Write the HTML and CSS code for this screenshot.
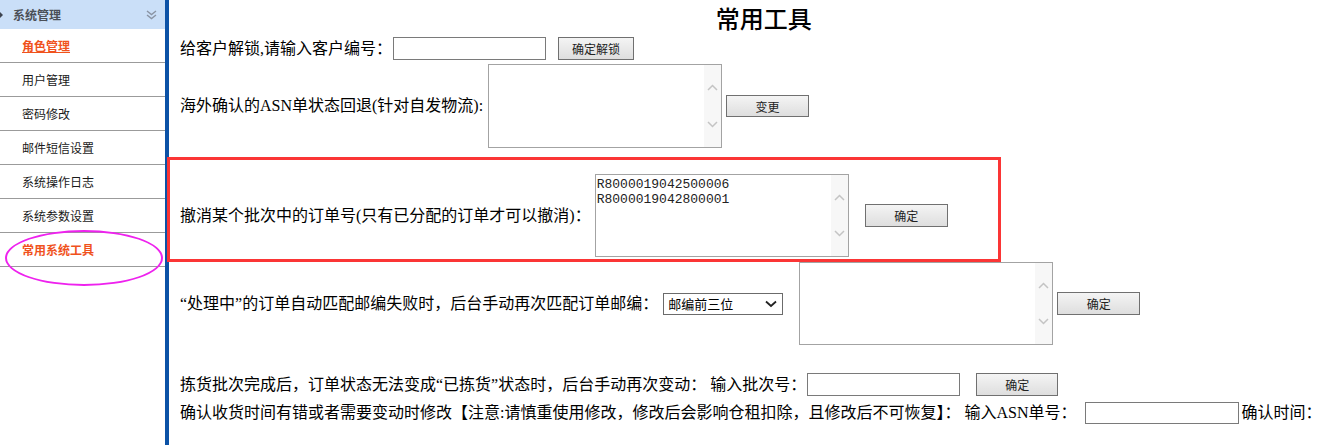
FILE: index.html
```html
<!DOCTYPE html>
<html lang="zh-CN">
<head>
    <meta charset="UTF-8">
    <title>常用工具</title>
    <link rel="stylesheet" href="styles.css">
</head>
<body>
    <div class="page">
        <div class="side">
            <div class="side-head">
                <span class="arrow"></span>
                <span class="head-text">系统管理</span>
                <svg class="fold" width="11" height="10" viewBox="0 0 11 10">
                    <path d="M1 1 L5.5 4.5 L10 1 M1 5 L5.5 8.5 L10 5" fill="none" stroke="#8a94a4" stroke-width="1.4"/>
                </svg>
            </div>
            <ul class="menu">
                <li><a href="#" class="link-on">角色管理</a></li>
                <li><a href="#">用户管理</a></li>
                <li><a href="#">密码修改</a></li>
                <li><a href="#">邮件短信设置</a></li>
                <li><a href="#">系统操作日志</a></li>
                <li><a href="#">系统参数设置</a></li>
                <li><a href="#" class="current">常用系统工具</a></li>
            </ul>
            <div class="ring"></div>
        </div>

        <div class="main">
            <h1>常用工具</h1>

            <div class="row r1">
                <span class="label">给客户解锁,请输入客户编号：</span>
                <input type="text" class="txt txt1">
                <button type="button" class="btn btn1">确定解锁</button>
            </div>

            <div class="row r2">
                <span class="label">海外确认的ASN单状态回退(针对自发物流):</span>
                <div class="area area2">
                    <textarea></textarea>
                    <div class="scroll">
                        <svg width="11" height="7" viewBox="0 0 11 7"><path d="M1 6 L5.5 1.5 L10 6" fill="none" stroke="#c4c4c4" stroke-width="1.5"/></svg>
                        <svg width="11" height="7" viewBox="0 0 11 7"><path d="M1 1 L5.5 5.5 L10 1" fill="none" stroke="#c4c4c4" stroke-width="1.5"/></svg>
                    </div>
                </div>
                <button type="button" class="btn btn2">变更</button>
            </div>

            <div class="row r3">
                <span class="label">撤消某个批次中的订单号(只有已分配的订单才可以撤消)：</span>
                <div class="area area3">
                    <textarea>R8000019042500006
R8000019042800001</textarea>
                    <div class="scroll">
                        <svg width="11" height="7" viewBox="0 0 11 7"><path d="M1 6 L5.5 1.5 L10 6" fill="none" stroke="#c4c4c4" stroke-width="1.5"/></svg>
                        <svg width="11" height="7" viewBox="0 0 11 7"><path d="M1 1 L5.5 5.5 L10 1" fill="none" stroke="#c4c4c4" stroke-width="1.5"/></svg>
                    </div>
                </div>
                <button type="button" class="btn btn3">确定</button>
            </div>

            <div class="row r4">
                <span class="label">“处理中”的订单自动匹配邮编失败时，后台手动再次匹配订单邮编：</span>
                <div class="select">
                    <span>邮编前三位</span>
                    <svg width="12" height="8" viewBox="0 0 12 8"><path d="M1 1.5 L6 6 L11 1.5" fill="none" stroke="#222" stroke-width="1.8"/></svg>
                </div>
                <div class="area area4">
                    <textarea></textarea>
                    <div class="scroll">
                        <svg width="11" height="7" viewBox="0 0 11 7"><path d="M1 6 L5.5 1.5 L10 6" fill="none" stroke="#c4c4c4" stroke-width="1.5"/></svg>
                        <svg width="11" height="7" viewBox="0 0 11 7"><path d="M1 1 L5.5 5.5 L10 1" fill="none" stroke="#c4c4c4" stroke-width="1.5"/></svg>
                    </div>
                </div>
                <button type="button" class="btn btn4">确定</button>
            </div>

            <div class="row r5">
                <span class="label">拣货批次完成后，订单状态无法变成“已拣货”状态时，后台手动再次变动： 输入批次号：</span>
                <input type="text" class="txt txt5">
                <button type="button" class="btn btn5">确定</button>
            </div>

            <div class="row r6">
                <span class="label">确认收货时间有错或者需要变动时修改【注意:请慎重使用修改，修改后会影响仓租扣除，且修改后不可恢复】： 输入ASN单号：</span>
                <input type="text" class="txt txt6">
                <span class="label tail">确认时间：</span>
            </div>

            <div class="mark"></div>
        </div>
    </div>
</body>
</html>
```

FILE: styles.css
```css
body {
    margin: 0;
    background-color: #fff;
    font-family: "Liberation Serif", "Noto Sans CJK SC", serif;
    color: #000;
    overflow: hidden;
}
.page {
    display: flex;
    height: 445px;
}

/* left menu */
.side {
    position: relative;
    width: 165px;
    flex: none;
    border-right: 4px solid #0c52a6;
    font-family: "Noto Sans CJK SC", sans-serif;
    font-size: 12px;
}
.side-head {
    height: 29px;
    background-color: #cadff8;
    display: flex;
    align-items: center;
    color: #4a4f57;
    font-weight: bold;
}
.arrow {
    width: 0;
    height: 0;
    border-top: 4px solid transparent;
    border-bottom: 4px solid transparent;
    border-left: 4px solid #3d4450;
    margin-left: -1px;
}
.head-text {
    margin-left: 10px;
}
.fold {
    margin-left: auto;
    margin-right: 8px;
}
.menu {
    list-style: none;
    margin: 0;
    padding: 0;
}
.menu li {
    height: 33px;
    border-bottom: 1px solid #9b9b9b;
    display: flex;
    align-items: center;
    padding-left: 22px;
}
.menu a {
    color: #1a1a1a;
    text-decoration: none;
}
.menu a.link-on {
    color: #f0521c;
    text-decoration: underline;
    font-weight: bold;
}
.menu a.current {
    color: #f0521c;
    font-weight: bold;
}
.ring {
    position: absolute;
    left: 5px;
    top: 230px;
    width: 158px;
    height: 56px;
    box-sizing: border-box;
    border: 2px solid #ee22ee;
    border-radius: 50%;
}

/* tools */
.main {
    position: relative;
    flex: 1;
    padding-left: 11px;
    white-space: nowrap;
}
h1 {
    margin: 0;
    height: 37px;
    line-height: 36px;
    font-size: 24px;
    font-weight: 500;
    text-align: center;
    padding-left: 26px;
    font-family: "Noto Sans CJK SC", serif;
}
.row {
    display: flex;
    align-items: center;
}
.label {
    font-size: 16px;
    line-height: 20px;
}
.txt {
    box-sizing: border-box;
    height: 23px;
    border: 1px solid #7a7a7a;
    padding: 0 3px;
    margin: 0;
}
.btn {
    box-sizing: border-box;
    height: 23px;
    padding: 0;
    border: 1px solid #707070;
    background: linear-gradient(#f4f4f4, #dedede);
    font-family: "Noto Sans CJK SC", sans-serif;
    font-size: 12px;
    color: #222;
}
.area {
    box-sizing: border-box;
    display: flex;
    border: 1px solid #a3a3a3;
    background-color: #fff;
}
.area textarea {
    flex: 1;
    border: none;
    resize: none;
    outline: none;
    margin: 0;
    padding: 2px 1px;
    font-family: "Liberation Mono", monospace;
    font-size: 13px;
    line-height: 15px;
    color: #222;
    overflow: hidden;
}
.scroll {
    width: 17px;
    background-color: #f7f7f7;
    display: flex;
    flex-direction: column;
    align-items: center;
    justify-content: space-between;
    padding: 19px 0 19px;
}
.select {
    box-sizing: border-box;
    width: 120px;
    height: 22px;
    border: 1px solid #6b6b6b;
    display: flex;
    align-items: center;
    padding: 0 5px 0 4px;
    font-family: "Noto Sans CJK SC", sans-serif;
    font-size: 13px;
    justify-content: space-between;
}

.r1 { margin-top: 0; height: 23px; }
.txt1 { width: 153px; margin-left: 1px; }
.btn1 { width: 76px; margin-left: 12px; }

.r2 { margin-top: 4px; }
.area2 { width: 234px; height: 84px; margin-left: 5px; }
.btn2 { width: 83px; height: 22px; margin-left: 4px; }

.r3 { margin-top: 26px; }
.area3 { width: 254px; height: 83px; margin-left: 4px; }
.btn3 { width: 83px; margin-left: 16px; }

.r4 { margin-top: 5px; }
.r4 .select { margin-left: 5px; }
.area4 { width: 254px; height: 83px; margin-left: 16px; }
.btn4 { width: 83px; margin-left: 4px; }

.r5 { margin-top: 28px; height: 23px; }
.txt5 { width: 153px; margin-left: 1px; }
.btn5 { width: 82px; margin-left: 16px; }

.r6 { margin-top: 6px; height: 22px; }
.txt6 { width: 154px; height: 22px; margin-left: 9px; }
.tail { margin-left: 2px; }

/* red frame drawn around the row */
.mark {
    position: absolute;
    left: -2px;
    top: 157px;
    width: 834px;
    height: 105px;
    box-sizing: border-box;
    border: 3px solid #fb3535;
}
```
